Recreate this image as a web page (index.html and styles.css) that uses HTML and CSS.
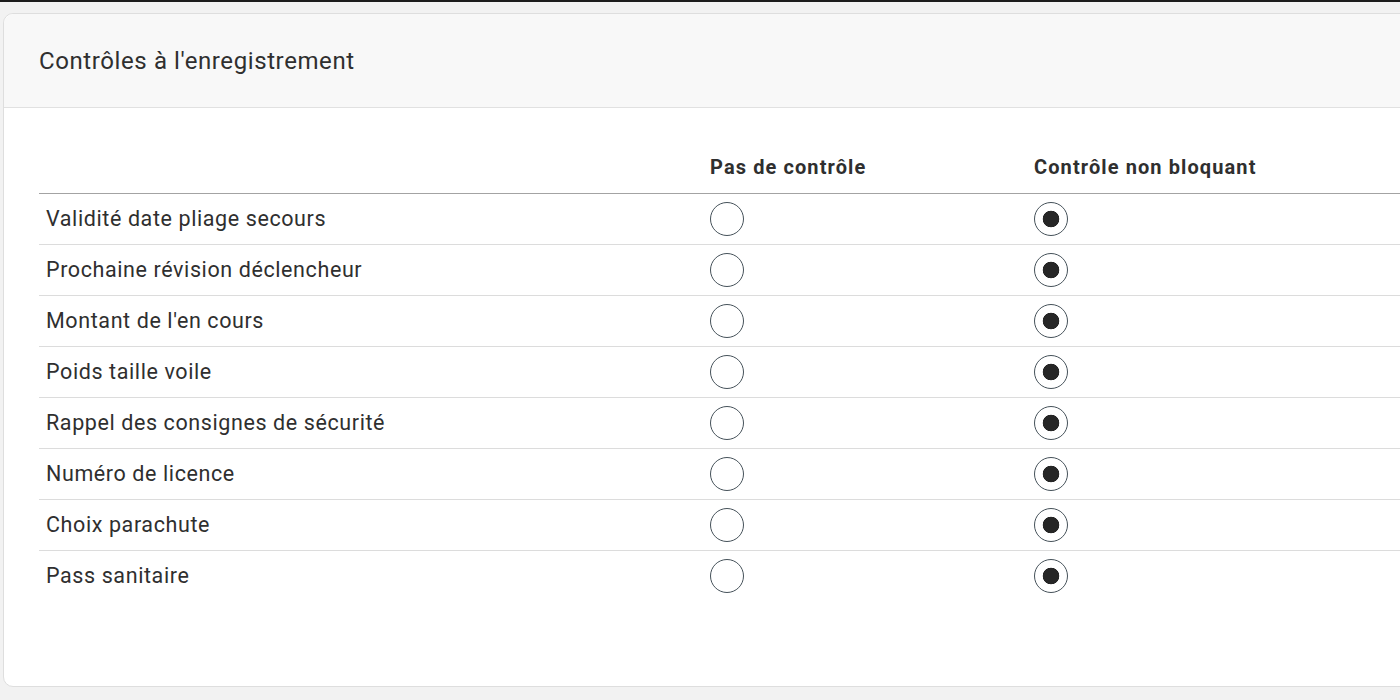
FILE: index.html
```html
<!DOCTYPE html>
<html>

<head>
    <meta charset="UTF-8">
    <meta name="viewport" content="width=device-width, initial-scale=1.0">
    <title>Contrôles à l'enregistrement</title>
    <link rel="stylesheet" href="styles.css">
</head>

<body>
    <div class="card">
        <div class="card-header">Contrôles à l'enregistrement</div>
        <div class="card-body">
            <table class="controls">
                <thead>
                    <tr>
                        <th class="col-label"></th>
                        <th class="col-opt">Pas de contrôle</th>
                        <th>Contrôle non bloquant</th>
                    </tr>
                </thead>
                <tbody>
                    <tr>
                        <td>Validité date pliage secours</td>
                        <td><input type="radio" name="c1"></td>
                        <td><input type="radio" name="c1" checked></td>
                    </tr>
                    <tr>
                        <td>Prochaine révision déclencheur</td>
                        <td><input type="radio" name="c2"></td>
                        <td><input type="radio" name="c2" checked></td>
                    </tr>
                    <tr>
                        <td>Montant de l'en cours</td>
                        <td><input type="radio" name="c3"></td>
                        <td><input type="radio" name="c3" checked></td>
                    </tr>
                    <tr>
                        <td>Poids taille voile</td>
                        <td><input type="radio" name="c4"></td>
                        <td><input type="radio" name="c4" checked></td>
                    </tr>
                    <tr>
                        <td>Rappel des consignes de sécurité</td>
                        <td><input type="radio" name="c5"></td>
                        <td><input type="radio" name="c5" checked></td>
                    </tr>
                    <tr>
                        <td>Numéro de licence</td>
                        <td><input type="radio" name="c6"></td>
                        <td><input type="radio" name="c6" checked></td>
                    </tr>
                    <tr>
                        <td>Choix parachute</td>
                        <td><input type="radio" name="c7"></td>
                        <td><input type="radio" name="c7" checked></td>
                    </tr>
                    <tr>
                        <td>Pass sanitaire</td>
                        <td><input type="radio" name="c8"></td>
                        <td><input type="radio" name="c8" checked></td>
                    </tr>
                </tbody>
            </table>
        </div>
    </div>
</body>

</html>
```

FILE: styles.css
```css
body {
    margin: 0;
    font-family: Roboto, "Liberation Sans", sans-serif;
    background-color: #f2f2f2;
    border-top: 2px solid #1c1c1c;
    color: #2f2f2f;
    overflow: hidden;
    height: 698px;
}

.card {
    width: 1460px;
    margin: 11px 0 0 3px;
    background-color: white;
    border: 1px solid #dedede;
    border-radius: 10px;
}

.card-header {
    height: 93px;
    display: flex;
    align-items: center;
    padding: 0 35px;
    background-color: #f8f8f8;
    border-bottom: 1px solid #e1e1e1;
    border-radius: 10px 10px 0 0;
    font-size: 24px;
    letter-spacing: 0.6px;
    color: #2f2f2f;
}

.card-body {
    padding: 46px 35px 85px;
}

.controls {
    width: 100%;
    border-collapse: separate;
    border-spacing: 0;
}

.controls th {
    text-align: left;
    font-size: 20px;
    font-weight: 700;
    letter-spacing: 1.1px;
    line-height: 26px;
    padding: 0 7px 13px;
    border-bottom: 1px solid #a3a3a3;
}

.controls .col-label {
    width: 650px;
}

.controls .col-opt {
    width: 310px;
}

.controls td {
    font-size: 21.5px;
    letter-spacing: 0.6px;
    line-height: 34px;
    padding: 8px 7px;
    vertical-align: middle;
}

.controls tbody tr + tr td {
    border-top: 1px solid #dcdcdc;
}

.controls input[type="radio"] {
    appearance: none;
    -webkit-appearance: none;
    display: block;
    margin: 0;
    width: 34px;
    height: 34px;
    border: 1.5px solid #46525a;
    border-radius: 50%;
    background-color: white;
}

.controls input[type="radio"]:checked {
    background: radial-gradient(circle, #262626 0 8px, white 8.6px);
}
```
